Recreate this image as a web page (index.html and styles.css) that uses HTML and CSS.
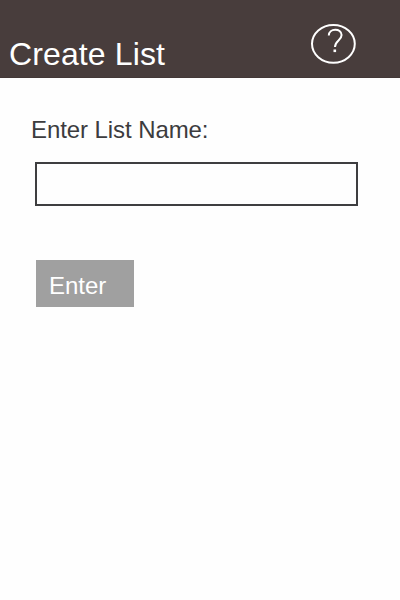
FILE: index.html
```html
<!DOCTYPE html>
<html lang="en">
<head>
<meta charset="utf-8">
<title>Create List</title>
<link rel="stylesheet" href="styles.css">
</head>
<body>
<header class="header">
  <h1 class="title">Create List</h1>
  <button class="help" aria-label="Help">
    <svg width="46" height="42" viewBox="0 0 46 42" fill="none" stroke="#fff">
      <ellipse cx="22.4" cy="20.8" rx="21.4" ry="18.9" stroke-width="2"/>
      <path d="M17.8 12.5C17.8 5 30.6 4.8 30.6 12C30.6 17.5 24 17.5 24 24" stroke-width="2"/>
      <rect x="22.5" y="26.5" width="2.6" height="2.6" fill="#fff" stroke="none"/>
    </svg>
  </button>
</header>
<main class="form">
  <label class="label" for="name">Enter List Name:</label>
  <input class="field" id="name" type="text">
  <button class="submit">Enter</button>
</main>
</body>
</html>
```

FILE: styles.css
```css
* { box-sizing: border-box; }
body {
  margin: 0;
  min-height: 600px;
  background: #fefefe;
  font-family: "Liberation Sans", Arial, sans-serif;
}
.header {
  display: flex;
  justify-content: space-between;
  align-items: flex-start;
  height: 78px;
  padding: 23px 43px 0 9px;
  background: #483d3c;
  border-bottom: 1px solid #433837;
}
.title {
  margin: 13px 0 0;
  color: #fff;
  font-size: 32px;
  font-weight: 400;
  line-height: 36px;
  letter-spacing: 0.12px;
}
.help {
  width: 46px;
  height: 42px;
  padding: 0;
  border: 0;
  background: none;
}
.help svg { display: block; }
.form {
  display: flex;
  flex-direction: column;
  align-items: flex-start;
  padding: 38px 42px 0 31px;
}
.label {
  color: #3c3c3e;
  font-size: 24px;
  line-height: 28px;
  letter-spacing: -0.08px;
}
.field {
  width: 323px;
  height: 44px;
  margin: 18px 0 0 4px;
  padding: 0 8px;
  border: 2px solid #3e3e40;
  border-radius: 0;
  background: #fefefe;
  font: inherit;
  font-size: 24px;
}
.submit {
  width: 98px;
  height: 47px;
  margin: 54px 0 0 5px;
  padding: 4px 0 0 13px;
  border: 0;
  background: #a0a0a0;
  color: #fff;
  font: inherit;
  font-size: 24px;
  text-align: left;
}
```
